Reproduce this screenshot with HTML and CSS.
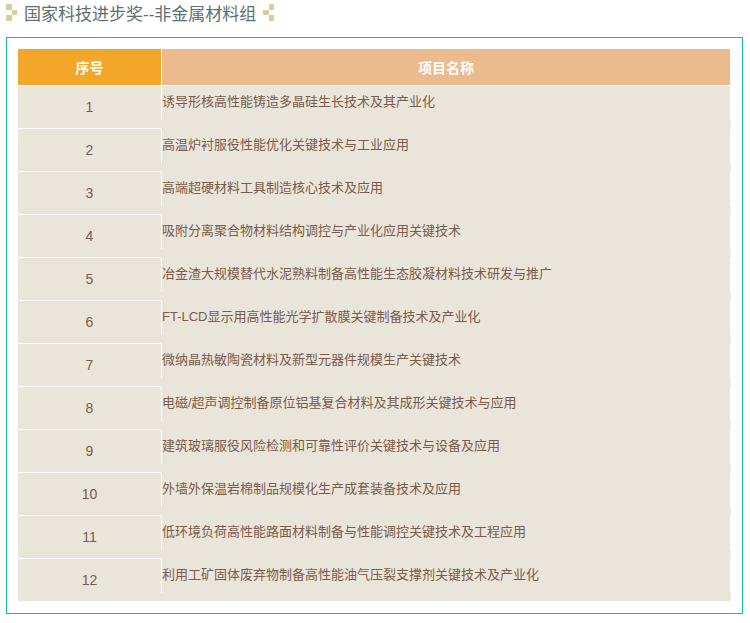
FILE: index.html
```html
<!DOCTYPE html>
<html lang="zh">
<head>
<meta charset="utf-8">
<title>国家科技进步奖</title>
<link rel="stylesheet" href="styles.css">
</head>
<body>
<h1 class="title">
  <svg class="mark" width="11" height="17" viewBox="0 0 11 17"><path d="M0 0h6v6H0zM6 6h5v5H6zM0 11h6v6H0z"/></svg>
  <span>国家科技进步奖--非金属材料组</span>
  <svg class="mark" width="11" height="17" viewBox="0 0 11 17"><path d="M6 0h5v6H6zM0 6h6v5H0zM6 11h5v6H6z"/></svg>
</h1>
<section class="box">
  <div class="head"><div class="head-no">序号</div><div class="head-name">项目名称</div></div>
  <div class="row"><div class="no">1</div><div class="name">诱导形核高性能铸造多晶硅生长技术及其产业化</div></div>
  <div class="row"><div class="no">2</div><div class="name">高温炉衬服役性能优化关键技术与工业应用</div></div>
  <div class="row"><div class="no">3</div><div class="name">高端超硬材料工具制造核心技术及应用</div></div>
  <div class="row"><div class="no">4</div><div class="name">吸附分离聚合物材料结构调控与产业化应用关键技术</div></div>
  <div class="row"><div class="no">5</div><div class="name">冶金渣大规模替代水泥熟料制备高性能生态胶凝材料技术研发与推广</div></div>
  <div class="row"><div class="no">6</div><div class="name">FT-LCD显示用高性能光学扩散膜关键制备技术及产业化</div></div>
  <div class="row"><div class="no">7</div><div class="name">微纳晶热敏陶瓷材料及新型元器件规模生产关键技术</div></div>
  <div class="row"><div class="no">8</div><div class="name">电磁/超声调控制备原位铝基复合材料及其成形关键技术与应用</div></div>
  <div class="row"><div class="no">9</div><div class="name">建筑玻璃服役风险检测和可靠性评价关键技术与设备及应用</div></div>
  <div class="row"><div class="no">10</div><div class="name">外墙外保温岩棉制品规模化生产成套装备技术及应用</div></div>
  <div class="row"><div class="no">11</div><div class="name">低环境负荷高性能路面材料制备与性能调控关键技术及工程应用</div></div>
  <div class="row last"><div class="no">12</div><div class="name">利用工矿固体废弃物制备高性能油气压裂支撑剂关键技术及产业化</div></div>
</section>
</body>
</html>
```
FILE: styles.css
```css
* { box-sizing: border-box; }
html, body { margin: 0; padding: 0; background: #fff; }
body { width: 750px; height: 623px; overflow: hidden; font-family: "Liberation Sans", "Noto Sans CJK SC", sans-serif; }
.title {
  display: flex;
  align-items: center;
  height: 37px;
  margin: 0;
  padding: 0 0 13px 6px;
  font-size: 17px;
  font-weight: 400;
  color: #5e7070;
  white-space: nowrap;
}
.title span { margin: 0 7px 0 7px; }
.mark { fill: #dccb9c; flex: none; }
.box {
  width: 737px;
  height: 577px;
  margin-left: 6px;
  padding: 11px 11px 0;
  border: 1px solid #17b8b4;
}
.head { display: flex; width: 712px; height: 37px; border-bottom: 1px solid #fff; color: #fff; font-weight: 700; font-size: 14px; }
.head-no, .head-name { display: flex; align-items: center; justify-content: center; padding-bottom: 1px; }
.head-no { width: 143px; background: #f3a72a; }
.head-name { flex: 1; border-left: 1px solid #fff; background: #ebbb8e; }
.row {
  display: flex;
  width: 713px;
  height: 43px;
  background:
    linear-gradient(#e9e5db, #e9e5db) 0 0 / 712px 100% no-repeat,
    linear-gradient(#f1eee7, #f1eee7) 100% 100% / 1px 9px no-repeat;
  color: #7c5b4b;
}
.no {
  width: 143px;
  height: 43px;
  padding-top: 13px;
  border-bottom: 1px solid #fff;
  text-align: center;
  font-size: 14px;
  line-height: 16px;
}
.name {
  flex: 1;
  height: 34px;
  padding-top: 7px;
  border-left: 1px solid #fff;
  font-size: 13px;
  line-height: 18px;
  white-space: nowrap;
}
.last { height: 42px; }
.last .no { height: 42px; border-bottom: 0; }
```
